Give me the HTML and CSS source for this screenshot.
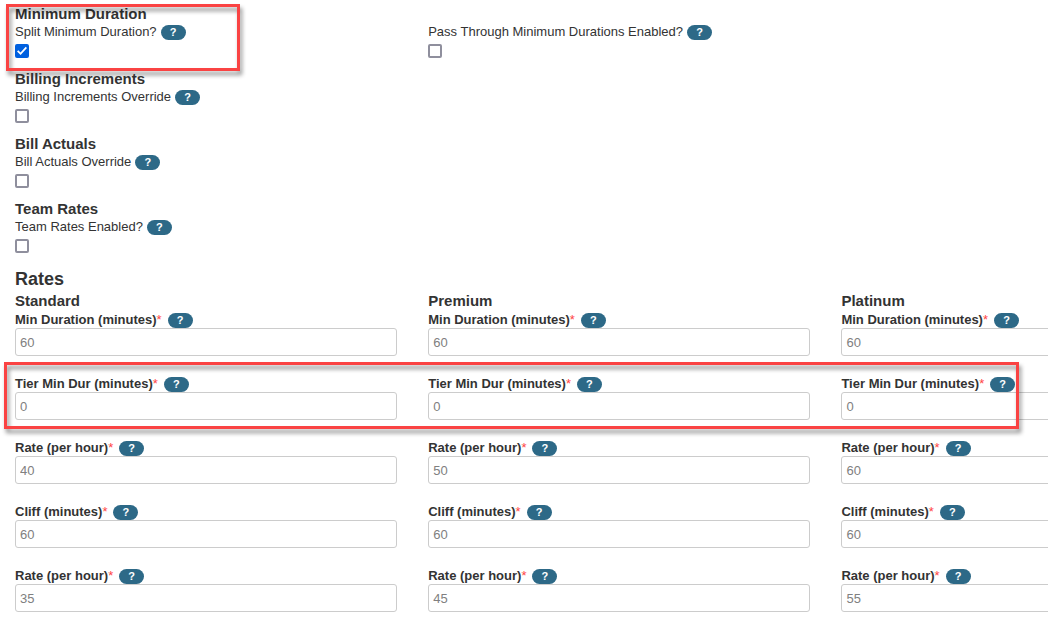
FILE: index.html
```html
<!DOCTYPE html>
<html lang="en">
<head>
<meta charset="utf-8">
<title>Rates</title>
<link rel="stylesheet" href="styles.css">
</head>
<body>
<form class="settings">
  <section class="option">
    <h3 class="heading">Minimum Duration</h3>
    <div class="columns">
      <div class="toggle">
        <div class="caption"><label for="split">Split Minimum Duration?</label><button type="button" class="help">?</button></div>
        <input class="check" type="checkbox" id="split" checked>
      </div>
      <div class="toggle">
        <div class="caption"><label for="pass">Pass Through Minimum Durations Enabled?</label><button type="button" class="help">?</button></div>
        <input class="check" type="checkbox" id="pass">
      </div>
    </div>
    <div class="callout callout-option"></div>
  </section>
  <section class="option">
    <h3 class="heading">Billing Increments</h3>
    <div class="toggle">
      <div class="caption"><label for="billing">Billing Increments Override</label><button type="button" class="help">?</button></div>
      <input class="check" type="checkbox" id="billing">
    </div>
  </section>
  <section class="option">
    <h3 class="heading">Bill Actuals</h3>
    <div class="toggle">
      <div class="caption"><label for="actuals">Bill Actuals Override</label><button type="button" class="help">?</button></div>
      <input class="check" type="checkbox" id="actuals">
    </div>
  </section>
  <section class="option">
    <h3 class="heading">Team Rates</h3>
    <div class="toggle">
      <div class="caption"><label for="team">Team Rates Enabled?</label><button type="button" class="help">?</button></div>
      <input class="check" type="checkbox" id="team">
    </div>
  </section>

  <section class="rates">
    <h2 class="title">Rates</h2>
    <div class="columns tiers">
      <h3 class="heading">Standard</h3>
      <h3 class="heading">Premium</h3>
      <h3 class="heading">Platinum</h3>
    </div>
    <div class="columns row">
      <div class="field"><div class="caption"><label for="min1">Min Duration (minutes)<span class="required">*</span></label><button type="button" class="help">?</button></div><input class="text" type="text" id="min1" value="60"></div>
      <div class="field"><div class="caption"><label for="min2">Min Duration (minutes)<span class="required">*</span></label><button type="button" class="help">?</button></div><input class="text" type="text" id="min2" value="60"></div>
      <div class="field"><div class="caption"><label for="min3">Min Duration (minutes)<span class="required">*</span></label><button type="button" class="help">?</button></div><input class="text" type="text" id="min3" value="60"></div>
    </div>
    <div class="columns row">
      <div class="field"><div class="caption"><label for="tier1">Tier Min Dur (minutes)<span class="required">*</span></label><button type="button" class="help">?</button></div><input class="text" type="text" id="tier1" value="0"></div>
      <div class="field"><div class="caption"><label for="tier2">Tier Min Dur (minutes)<span class="required">*</span></label><button type="button" class="help">?</button></div><input class="text" type="text" id="tier2" value="0"></div>
      <div class="field"><div class="caption"><label for="tier3">Tier Min Dur (minutes)<span class="required">*</span></label><button type="button" class="help">?</button></div><input class="text" type="text" id="tier3" value="0"></div>
      <div class="callout callout-row"></div>
    </div>
    <div class="columns row">
      <div class="field"><div class="caption"><label for="rate1">Rate (per hour)<span class="required">*</span></label><button type="button" class="help">?</button></div><input class="text" type="text" id="rate1" value="40"></div>
      <div class="field"><div class="caption"><label for="rate2">Rate (per hour)<span class="required">*</span></label><button type="button" class="help">?</button></div><input class="text" type="text" id="rate2" value="50"></div>
      <div class="field"><div class="caption"><label for="rate3">Rate (per hour)<span class="required">*</span></label><button type="button" class="help">?</button></div><input class="text" type="text" id="rate3" value="60"></div>
    </div>
    <div class="columns row">
      <div class="field"><div class="caption"><label for="cliff1">Cliff (minutes)<span class="required">*</span></label><button type="button" class="help">?</button></div><input class="text" type="text" id="cliff1" value="60"></div>
      <div class="field"><div class="caption"><label for="cliff2">Cliff (minutes)<span class="required">*</span></label><button type="button" class="help">?</button></div><input class="text" type="text" id="cliff2" value="60"></div>
      <div class="field"><div class="caption"><label for="cliff3">Cliff (minutes)<span class="required">*</span></label><button type="button" class="help">?</button></div><input class="text" type="text" id="cliff3" value="60"></div>
    </div>
    <div class="columns row">
      <div class="field"><div class="caption"><label for="after1">Rate (per hour)<span class="required">*</span></label><button type="button" class="help">?</button></div><input class="text" type="text" id="after1" value="35"></div>
      <div class="field"><div class="caption"><label for="after2">Rate (per hour)<span class="required">*</span></label><button type="button" class="help">?</button></div><input class="text" type="text" id="after2" value="45"></div>
      <div class="field"><div class="caption"><label for="after3">Rate (per hour)<span class="required">*</span></label><button type="button" class="help">?</button></div><input class="text" type="text" id="after3" value="55"></div>
    </div>
  </section>
</form>
</body>
</html>
```
FILE: styles.css
```css
* {
  box-sizing: border-box;
}

body {
  margin: 0;
  background: #fff;
  color: #333;
  font: 13px/18px "Liberation Sans", Arial, sans-serif;
}

.settings {
  padding: 5px 0 0 15px;
  overflow: hidden;
}

.option {
  position: relative;
  padding-bottom: 12px;
}

.heading {
  margin: 0;
  font-size: 15px;
  line-height: 18px;
}

.title {
  margin: 0;
  padding-top: 2px;
  font-size: 18px;
  line-height: 24px;
}

.columns {
  display: grid;
  grid-template-columns: repeat(3, 37%);
  column-gap: 31px;
}

.caption {
  display: flex;
  align-items: center;
  gap: 4px;
}

.help {
  width: 25px;
  height: 15px;
  margin: 0;
  padding: 0;
  border: 0;
  border-radius: 8px;
  background: #2d6987;
  color: #fff;
  font: bold 11px/15px "Liberation Sans", Arial, sans-serif;
  text-align: center;
}

.check {
  appearance: none;
  display: block;
  width: 14px;
  height: 14px;
  margin: 3px 0 0;
  border: 2px solid #8f8f9d;
  border-radius: 2px;
  background: #fff;
}

.check:checked {
  display: grid;
  place-items: center;
  border-color: #0060df;
  background: #0060df;
}

.check:checked::before {
  content: "";
  width: 10px;
  height: 10px;
  background: #fff;
  clip-path: polygon(0 55%, 13% 42%, 35% 64%, 87% 8%, 100% 20%, 36% 90%);
}

.tiers .heading {
  line-height: 20px;
}

.row {
  position: relative;
  padding-bottom: 19px;
}

.field .caption {
  height: 17px;
  gap: 6px;
  font-weight: bold;
}

.field .help {
  margin-top: 2px;
}

.required {
  color: #f44;
  font-weight: normal;
}

.text {
  display: block;
  width: 100%;
  height: 28px;
  padding: 0 4px;
  border: 1px solid #ccc;
  border-radius: 3px;
  background: #fff;
  color: #808080;
  font: 13px/18px "Liberation Sans", Arial, sans-serif;
}

.callout {
  position: absolute;
  border: 3px solid #fa4343;
  filter: drop-shadow(2px 4px 2px rgba(0, 0, 0, 0.45));
  pointer-events: none;
}

.callout-option {
  top: -1px;
  left: -9px;
  width: 234px;
  height: 67px;
}

.callout-row {
  top: -13px;
  right: 29px;
  bottom: 10px;
  left: -11px;
}
```
